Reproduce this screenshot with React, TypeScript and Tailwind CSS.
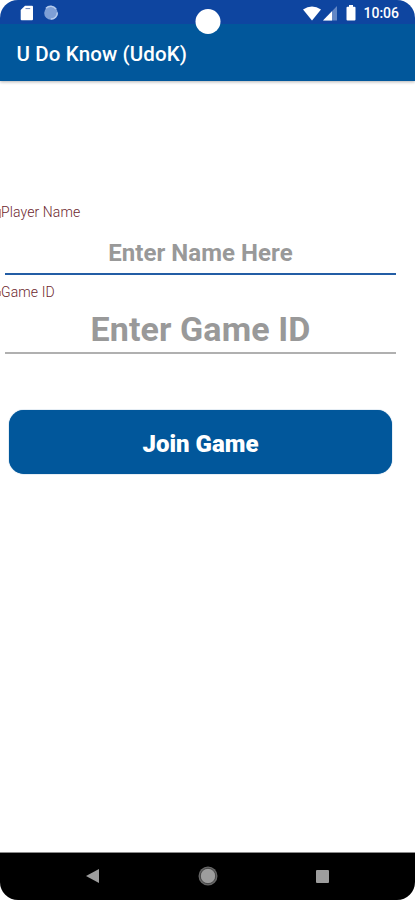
import clsx from 'clsx';

const StatusBar = () => (
  <div className="relative flex h-6 items-center bg-[#0e45a0] text-white">
    <svg className="ml-5 mt-0.5 h-4 w-[14px]" viewBox="0 0 14 16">
      <path
        d="M5 .8h7q1 0 1 1v12.5q0 1-1 1H1.7q-1 0-1-1V5.1z"
        fill="currentColor"
      />
      <path d="M5.5 3.6h4.7" stroke="#6d84b5" />
    </svg>
    <svg className="ml-[9px] mt-px h-4 w-4" viewBox="0 0 16 16">
      <circle cx="8" cy="8" fill="#7e9fd6" r="6.8" />
      <path
        d="M3 3.2a6.5 6.5 0 0 1 10 .8M14.3 7.5a6.4 6.4 0 0 1-6.5 6.6"
        fill="none"
        stroke="#b5cbed"
        strokeWidth="1.5"
      />
    </svg>
    <div className="-translate-x-1/2 absolute top-[9px] left-1/2 size-[25px] rounded-full bg-white" />
    <div className="ml-auto flex items-center pt-px pr-4">
      <svg className="h-4 w-[18px]" viewBox="0 0 18 16">
        <path d="M0 4.5Q9-1.5 18 4.5L9 15.6z" fill="currentColor" />
      </svg>
      <svg className="ml-[2px] h-4 w-[14px]" viewBox="0 0 14 16">
        <path d="M14 1v14.5H0z" fill="#6387c5" />
        <path d="M9 6.2v9.3H0z" fill="currentColor" />
      </svg>
      <svg className="ml-[9px] h-4 w-[10px]" viewBox="0 0 10 16">
        <path
          d="M3 0h4v1.7h1.5q1 0 1 1v11.8q0 1-1 1h-7q-1 0-1-1V2.7q0-1 1-1H3z"
          fill="currentColor"
        />
      </svg>
      <span className="ml-[7px] pt-px font-medium text-[14px] leading-4">
        10:06
      </span>
    </div>
  </div>
);

type FieldProps = {
  label: string;
  placeholder: string;
  active?: boolean;
};

const Field = ({ label, placeholder, active }: FieldProps) => (
  <label className={clsx('block', active ? 'h-20' : 'h-[79px]')}>
    <span className="relative block h-[18px] pl-px font-light text-[#6d1f2e] text-[14px] leading-4 tracking-[0.1px]">
      <span
        className={clsx(
          'absolute left-0 w-px bg-[#c295a0]',
          active ? 'top-[5px] h-[9px]' : 'top-[7px] h-[5px]'
        )}
      />
      {label}
    </span>
    <input
      className={clsx(
        'ml-[5px] block w-[391px] text-center font-bold outline-none placeholder:text-[#999999] placeholder:opacity-100',
        active
          ? 'h-[53px] border-[#235da5] border-b-2 pt-[11px] text-[24px] tracking-[0.05px]'
          : 'h-[52px] border-[#b0b0b0] border-b-2 pt-[3px] text-[34px] tracking-[0.1px]'
      )}
      placeholder={placeholder}
      type="text"
    />
  </label>
);

const NavigationBar = () => (
  <nav className="flex h-12 items-center border-[#8b8b8b] border-t bg-black pb-px text-[#9d9d9d]">
    <svg className="ml-[86px] h-[14px] w-[13px]" viewBox="0 0 13 14">
      <path d="M13 0v14L0 7z" fill="currentColor" />
    </svg>
    <svg className="ml-[99px] size-5" viewBox="0 0 20 20">
      <circle cx="10" cy="10" fill="#666" r="9.5" />
      <circle
        cx="10"
        cy="10"
        fill="currentColor"
        r="7.7"
        stroke="#333"
        strokeWidth="0.8"
      />
    </svg>
    <div className="ml-[98px] size-[13px] rounded-[1px] bg-current" />
  </nav>
);

const App = () => (
  <div className="flex h-screen w-full flex-col overflow-hidden rounded-[18px] bg-white font-['Roboto',sans-serif]">
    <StatusBar />
    <header className="flex h-[57px] shrink-0 items-center bg-[#01579b] pl-[16.5px] shadow-[0_1px_3px_rgba(0,0,0,0.3)]">
      <h1 className="pt-1 font-medium text-[20.5px] text-white tracking-[0.13px]">
        U Do Know (UdoK)
      </h1>
    </header>
    <main className="flex-1 pt-[123px]">
      <Field active label="Player Name" placeholder="Enter Name Here" />
      <Field label="Game ID" placeholder="Enter Game ID" />
      <button
        className="mt-[47px] ml-[9px] block h-16 w-[383px] rounded-[15px] bg-[#01579b] pt-1 font-black text-[24px] text-white shadow-[0_0_1px_#01579b]"
        type="button"
      >
        Join Game
      </button>
    </main>
    <NavigationBar />
  </div>
);

export default App;
